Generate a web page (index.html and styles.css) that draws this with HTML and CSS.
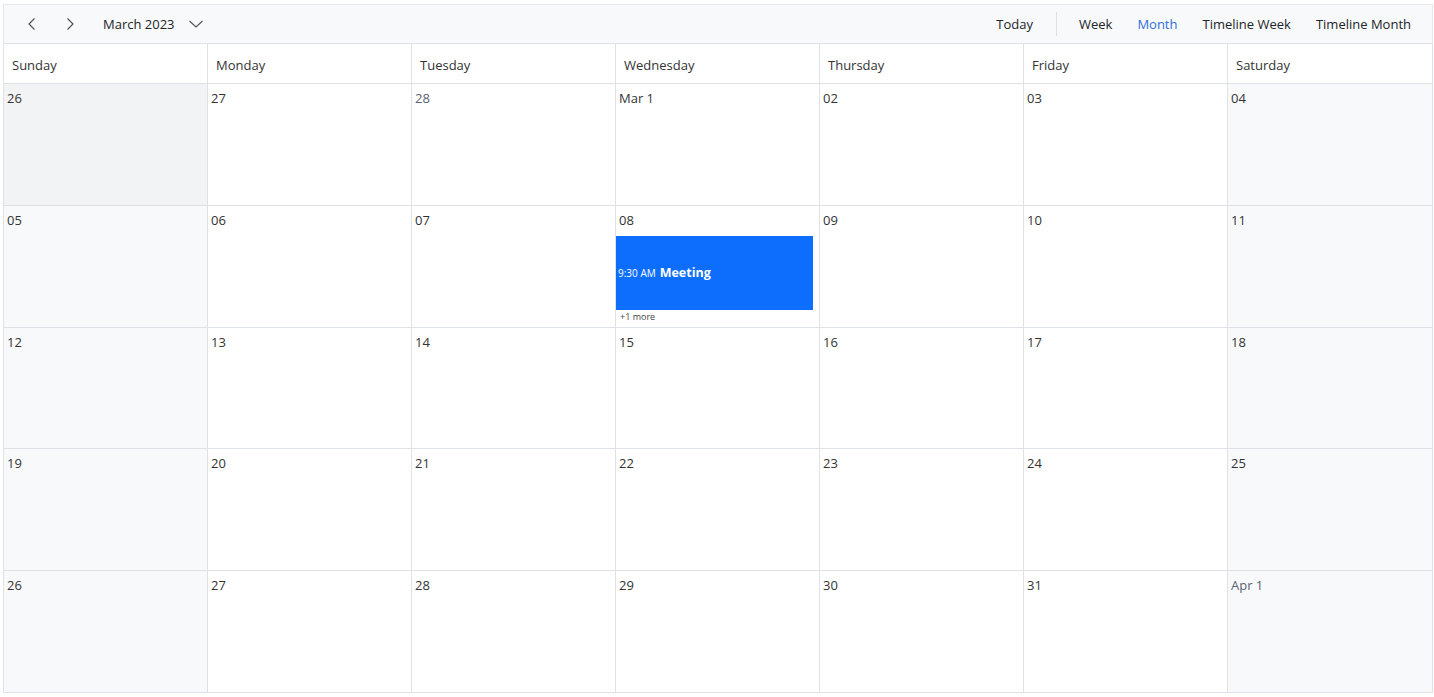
FILE: index.html
```html
<!DOCTYPE html>
<html>
  <head>
    <title>Scheduler</title>
    <link rel="stylesheet" href="styles.css">
  </head>
  <body>
    <div class="scheduler">
      <div class="toolbar">
        <div class="toolbar-left">
          <button class="icon-btn" title="Previous">
            <svg width="16" height="16" viewBox="0 0 16 16"><path d="M10.5 2.5 L5 8 L10.5 13.5" fill="none" stroke="#555" stroke-width="1.2"/></svg>
          </button>
          <button class="icon-btn" title="Next">
            <svg width="16" height="16" viewBox="0 0 16 16"><path d="M5.5 2.5 L11 8 L5.5 13.5" fill="none" stroke="#555" stroke-width="1.2"/></svg>
          </button>
          <button class="date-range">
            <span>March 2023</span>
            <svg width="16" height="16" viewBox="0 0 16 16"><path d="M1.5 5 L8 11 L14.5 5" fill="none" stroke="#555" stroke-width="1.2"/></svg>
          </button>
        </div>
        <div class="toolbar-right">
          <button class="view-btn">Today</button>
          <span class="separator"></span>
          <button class="view-btn">Week</button>
          <button class="view-btn active">Month</button>
          <button class="view-btn">Timeline Week</button>
          <button class="view-btn">Timeline Month</button>
        </div>
      </div>

      <div class="month">
        <div class="day-name">Sunday</div>
        <div class="day-name">Monday</div>
        <div class="day-name">Tuesday</div>
        <div class="day-name">Wednesday</div>
        <div class="day-name">Thursday</div>
        <div class="day-name">Friday</div>
        <div class="day-name">Saturday</div>

        <div class="cell weekend selected"><span class="date">26</span></div>
        <div class="cell"><span class="date">27</span></div>
        <div class="cell"><span class="date other">28</span></div>
        <div class="cell"><span class="date">Mar 1</span></div>
        <div class="cell"><span class="date">02</span></div>
        <div class="cell"><span class="date">03</span></div>
        <div class="cell weekend"><span class="date">04</span></div>

        <div class="cell weekend"><span class="date">05</span></div>
        <div class="cell"><span class="date">06</span></div>
        <div class="cell"><span class="date">07</span></div>
        <div class="cell">
          <span class="date">08</span>
          <div class="appointment">
            <span class="time">9:30 AM</span>
            <span class="subject">Meeting</span>
          </div>
          <span class="more">+1 more</span>
        </div>
        <div class="cell"><span class="date">09</span></div>
        <div class="cell"><span class="date">10</span></div>
        <div class="cell weekend"><span class="date">11</span></div>

        <div class="cell weekend"><span class="date">12</span></div>
        <div class="cell"><span class="date">13</span></div>
        <div class="cell"><span class="date">14</span></div>
        <div class="cell"><span class="date">15</span></div>
        <div class="cell"><span class="date">16</span></div>
        <div class="cell"><span class="date">17</span></div>
        <div class="cell weekend"><span class="date">18</span></div>

        <div class="cell weekend"><span class="date">19</span></div>
        <div class="cell"><span class="date">20</span></div>
        <div class="cell"><span class="date">21</span></div>
        <div class="cell"><span class="date">22</span></div>
        <div class="cell"><span class="date">23</span></div>
        <div class="cell"><span class="date">24</span></div>
        <div class="cell weekend"><span class="date">25</span></div>

        <div class="cell weekend"><span class="date">26</span></div>
        <div class="cell"><span class="date">27</span></div>
        <div class="cell"><span class="date">28</span></div>
        <div class="cell"><span class="date">29</span></div>
        <div class="cell"><span class="date">30</span></div>
        <div class="cell"><span class="date">31</span></div>
        <div class="cell weekend"><span class="date other">Apr 1</span></div>
      </div>
    </div>
  </body>
</html>
```

FILE: styles.css
```css
* {
  font-family: 'Open Sans', sans-serif;
  box-sizing: border-box;
}

body, html {
  margin: 0;
  padding: 0;
}

body {
  padding: 4px 1px 0 3px;
  color: #212529;
}

button {
  border: none;
  background: none;
  cursor: pointer;
  color: #212529;
  font-size: 13px;
  padding: 0;
}

.toolbar {
  height: 40px;
  display: flex;
  justify-content: space-between;
  align-items: center;
  background-color: #f8f9fa;
  border: 1px solid #e6e8eb;
  border-bottom-color: #dee2e6;
}

.toolbar-left {
  display: flex;
  align-items: center;
  padding-left: 17px;
}

.icon-btn {
  width: 22px;
  height: 30px;
  display: flex;
  align-items: center;
  justify-content: center;
  margin-right: 16px;
}

.date-range {
  display: flex;
  align-items: center;
  gap: 13px;
  margin-left: 6px;
}

.toolbar-right {
  display: flex;
  align-items: center;
  padding-right: 21px;
}

.view-btn {
  margin-left: 25px;
}

.view-btn:first-child {
  margin-left: 0;
}

.view-btn.active {
  color: #2f6fd9;
}

.separator {
  width: 1px;
  height: 24px;
  background-color: #dee2e6;
  margin-left: 23px;
  margin-right: -3px;
}

.month {
  display: grid;
  grid-template-columns: repeat(7, 1fr);
  grid-template-rows: 40px repeat(5, 121.8px);
  border-left: 1px solid #dee2e6;
  border-right: 1px solid #dee2e6;
}

.day-name {
  font-size: 13px;
  padding: 12px 0 0 8px;
  border-right: 1px solid #dee2e6;
  border-bottom: 1px solid #dee2e6;
  color: #333;
}

.day-name:nth-child(7) {
  border-right: none;
}

.cell {
  border-right: 1px solid #dee2e6;
  border-bottom: 1px solid #dee2e6;
  padding: 5px 0 0 3px;
  display: flex;
  flex-direction: column;
  align-items: flex-start;
}

.cell:nth-child(7n) {
  border-right: none;
}

.cell.weekend {
  background-color: #f8f9fb;
}

.cell.selected {
  background-color: #f2f3f5;
}

.date {
  font-size: 13px;
  color: #333;
}

.date.other {
  color: #5a6270;
}

.appointment {
  margin: 7px 0 0 -3px;
  width: 197px;
  height: 74px;
  background-color: #0d6efd;
  color: white;
  display: flex;
  align-items: center;
  gap: 4px;
  padding-left: 2px;
}

.appointment .time {
  font-size: 10px;
}

.appointment .subject {
  font-size: 12.5px;
  font-weight: 700;
}

.more {
  font-size: 9px;
  color: #444;
  margin-top: 0;
  padding-left: 1px;
}
```
